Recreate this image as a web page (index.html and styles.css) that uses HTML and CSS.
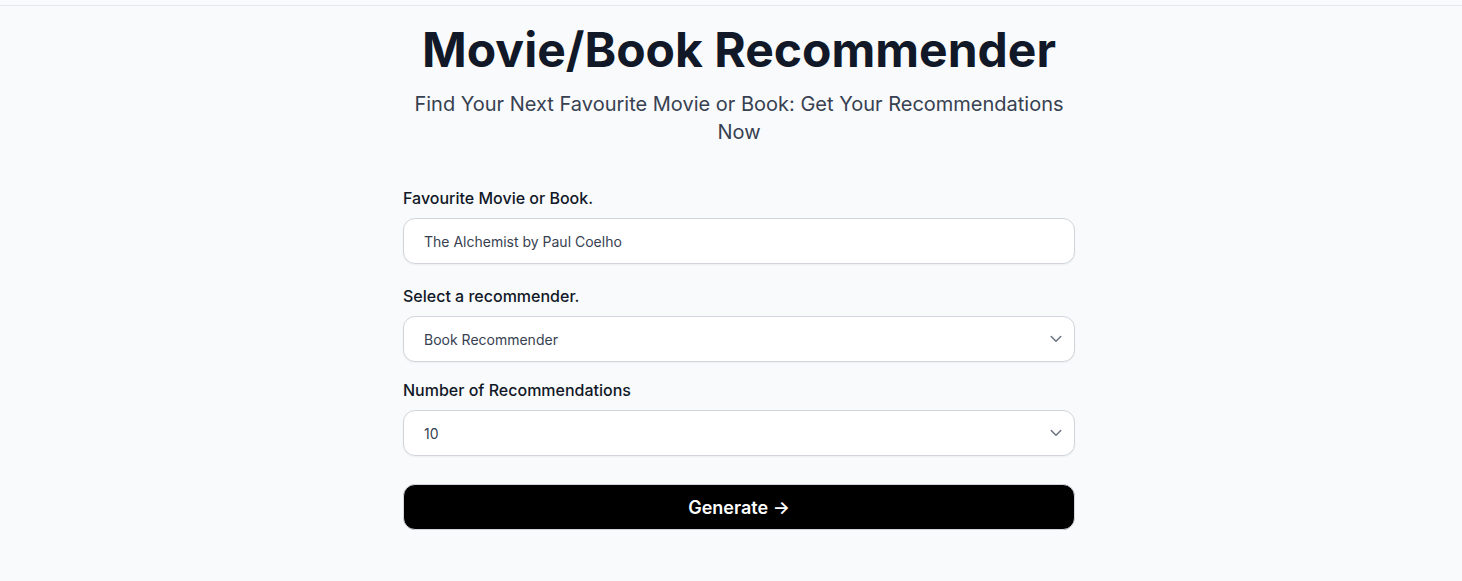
FILE: index.html
```html
<!DOCTYPE html>
<html lang="en">
<head>
    <meta charset="UTF-8">
    <meta name="viewport" content="width=device-width, initial-scale=1.0">
    <title>Movie/Book Recommender</title>
    <link rel="stylesheet" href="styles.css">
</head>
<body>
    <div class="topbar"></div>
    <main class="container">
        <h1 class="title">Movie/Book Recommender</h1>
        <p class="subtitle">Find Your Next Favourite Movie or Book: Get Your Recommendations Now</p>

        <form class="form">
            <div class="field">
                <label for="favourite">Favourite Movie or Book.</label>
                <input id="favourite" class="control" type="text" value="The Alchemist by Paul Coelho">
            </div>
            <div class="field">
                <label for="recommender">Select a recommender.</label>
                <div class="select-wrap">
                    <select id="recommender" class="control">
                        <option>Book Recommender</option>
                        <option>Movie Recommender</option>
                    </select>
                    <svg class="chevron" viewBox="0 0 20 20" width="20" height="20"><path d="M5.25 8.5L10 13.25L14.75 8.5" fill="none" stroke="#6b7280" stroke-width="1.5" stroke-linecap="round" stroke-linejoin="round"/></svg>
                </div>
            </div>
            <div class="field">
                <label for="count">Number of Recommendations</label>
                <div class="select-wrap">
                    <select id="count" class="control">
                        <option>10</option>
                        <option>5</option>
                        <option>15</option>
                    </select>
                    <svg class="chevron" viewBox="0 0 20 20" width="20" height="20"><path d="M5.25 8.5L10 13.25L14.75 8.5" fill="none" stroke="#6b7280" stroke-width="1.5" stroke-linecap="round" stroke-linejoin="round"/></svg>
                </div>
            </div>
            <button type="button" class="generate">Generate &rarr;</button>
        </form>
    </main>
</body>
</html>
```

FILE: styles.css
```css
body {
    margin: 0;
    padding-left: 16px;
    font-family: Inter, "Noto Sans", sans-serif;
    background: #f9fafb;
    color: #111827;
}
.topbar {
    height: 5px;
    margin-left: -16px;
    border-bottom: 1px solid #e5e7eb;
}
.container {
    max-width: 672px;
    margin: 0 auto;
    padding-top: 20px;
    text-align: center;
}
.title {
    margin: 0;
    font-size: 48px;
    line-height: 1;
    font-weight: 700;
    color: #111827;
}
.subtitle {
    margin: 16px 0 0;
    font-size: 20px;
    line-height: 28px;
    color: #374151;
}
.form {
    margin-top: 40px;
    text-align: left;
    display: flex;
    flex-direction: column;
}
.field {
    display: flex;
    flex-direction: column;
    gap: 8px;
    margin-bottom: 16px;
}
.field:first-child {
    margin-bottom: 20px;
}
.field label {
    font-size: 16px;
    line-height: 24px;
    font-weight: 500;
    color: #111827;
}
.control {
    box-sizing: border-box;
    width: 100%;
    height: 46px;
    padding: 0 20px;
    border: 1px solid #d1d5db;
    border-radius: 12px;
    background: #fff;
    box-shadow: 0 1px 2px rgba(0, 0, 0, 0.05);
    font-family: inherit;
    font-size: 14px;
    color: #374151;
    outline: none;
}
select.control {
    appearance: none;
    -webkit-appearance: none;
}
.select-wrap {
    position: relative;
}
.chevron {
    position: absolute;
    right: 9px;
    top: 12px;
    pointer-events: none;
}
.generate {
    margin-top: 12px;
    height: 46px;
    border: 1px solid #d1d5db;
    border-radius: 12px;
    background: #000;
    color: #fff;
    font-family: inherit;
    font-size: 18px;
    font-weight: 600;
    cursor: pointer;
}
```
